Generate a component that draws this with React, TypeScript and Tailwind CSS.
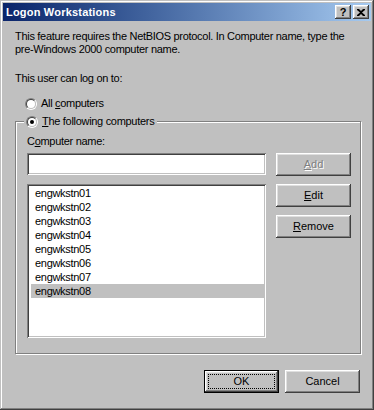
import React from "react";

const Radio = ({ checked }: { checked?: boolean }) => (
  <span className="w-[12px] h-[12px] rounded-full border border-t-[#808080] border-l-[#808080] border-r-white border-b-white flex shrink-0">
    <span className="flex-1 rounded-full border border-t-[#404040] border-l-[#404040] border-r-[#c0c0c0] border-b-[#c0c0c0] bg-white flex items-center justify-center">
      {checked && <span className="w-[4px] h-[4px] rounded-full bg-black" />}
    </span>
  </span>
);

const raised =
  "bg-[#c0c0c0] shadow-[inset_-1px_-1px_0_#404040,inset_1px_1px_0_#ffffff,inset_-2px_-2px_0_#808080,inset_2px_2px_0_#dfdfdf]";
const sunken =
  "bg-white shadow-[inset_1px_1px_0_#808080,inset_-1px_-1px_0_#ffffff,inset_2px_2px_0_#404040,inset_-2px_-2px_0_#c0c0c0]";

const Btn = ({ children, disabled }: { children: React.ReactNode; disabled?: boolean }) => (
  <div
    className={`w-[75px] h-[23px] ${raised} flex items-center justify-center text-[11px] ${
      disabled ? "text-[#808080] [text-shadow:1px_1px_0_#ffffff]" : "text-black"
    }`}
  >
    {children}
  </div>
);

const items = [
  "engwkstn01",
  "engwkstn02",
  "engwkstn03",
  "engwkstn04",
  "engwkstn05",
  "engwkstn06",
  "engwkstn07",
  "engwkstn08",
];

export default function App() {
  return (
    <div className="w-[374px] h-[410px] bg-[#c0c0c0] p-[3px] flex flex-col font-[family-name:'Liberation_Sans',Arial,sans-serif] text-[11px] text-black shadow-[inset_-1px_-1px_0_#404040,inset_1px_1px_0_#c0c0c0,inset_-2px_-2px_0_#808080,inset_2px_2px_0_#ffffff] select-none">
      {/* Title bar */}
      <div className="h-[18px] flex items-center bg-gradient-to-r from-[#0a246a] to-[#a6caf0] pl-[3px] pr-[2px]">
        <span className="text-white font-bold text-[11px] flex-1 leading-none tracking-[0.2px]">Logon Workstations</span>
        <div className="flex gap-[2px]">
          <div className={`w-[16px] h-[14px] ${raised} flex items-center justify-center`}>
            <span className="font-bold text-[11px] leading-none text-black">?</span>
          </div>
          <div className={`w-[16px] h-[14px] ${raised} flex items-center justify-center`}>
            <svg width="8" height="7" viewBox="0 0 8 7">
              <path d="M0 0h2l2 2 2-2h2v1L5 3.5 8 6v1H6L4 5 2 7H0V6l3-2.5L0 1z" fill="#000" />
            </svg>
          </div>
        </div>
      </div>

      {/* Body */}
      <div className="flex-1 flex flex-col pl-[12px] pt-[9px] tracking-[-0.3px]">
        <p className="leading-[13px]">
          This feature requires the NetBIOS protocol. In Computer name, type the
          <br />
          pre-Windows 2000 computer name.
        </p>
        <p className="leading-[13px] mt-[16px]">This user can log on to:</p>

        <div className="flex items-center mt-[12px] ml-[10px] h-[13px]">
          <Radio />
          <span className="ml-[4px]">
            All <u>c</u>omputers
          </span>
        </div>

        {/* Group box */}
        <div className="relative mt-[11px] w-[346px] h-[233px] border border-[#808080] shadow-[1px_1px_0_#ffffff,inset_1px_1px_0_#ffffff] flex flex-col pl-[11px] pt-[13px]">
          <div className="absolute -top-[7px] left-[8px] bg-[#c0c0c0] h-[13px] flex items-center pl-[2px] pr-[3px]">
            <Radio checked />
            <span className="ml-[4px]">
              <u>T</u>he following computers
            </span>
          </div>
          <p className="leading-[13px]">
            C<u>o</u>mputer name:
          </p>
          <div className="flex mt-[5px]">
            <div className="flex flex-col w-[239px]">
              <div className={`h-[22px] ${sunken}`} />
              <div className={`h-[154px] mt-[9px] ${sunken} p-[2px]`}>
                <div className="flex flex-col">
                  {items.map((it, i) => (
                    <div
                      key={it}
                      className={`h-[14px] leading-[14px] pl-[4px] ml-[2px] ${
                        i === items.length - 1 ? "bg-[#c0c0c0]" : ""
                      }`}
                    >
                      {it}
                    </div>
                  ))}
                </div>
              </div>
            </div>
            <div className="flex flex-col gap-[8px] ml-[10px] tracking-normal">
              <Btn disabled>
                <u>A</u>dd
              </Btn>
              <Btn>
                <u>E</u>dit
              </Btn>
              <Btn>
                <u>R</u>emove
              </Btn>
            </div>
          </div>
        </div>

        {/* Bottom buttons */}
        <div className="flex justify-end gap-[6px] mt-[16px] pr-[11px] tracking-normal">
          <div className="w-[75px] h-[23px] border border-black">
            <div className={`w-full h-full ${raised} flex items-center justify-center p-[3px]`}>
              <div className="w-full h-full border border-dotted border-black flex items-center justify-center">
                OK
              </div>
            </div>
          </div>
          <Btn>Cancel</Btn>
        </div>
      </div>
    </div>
  );
}
